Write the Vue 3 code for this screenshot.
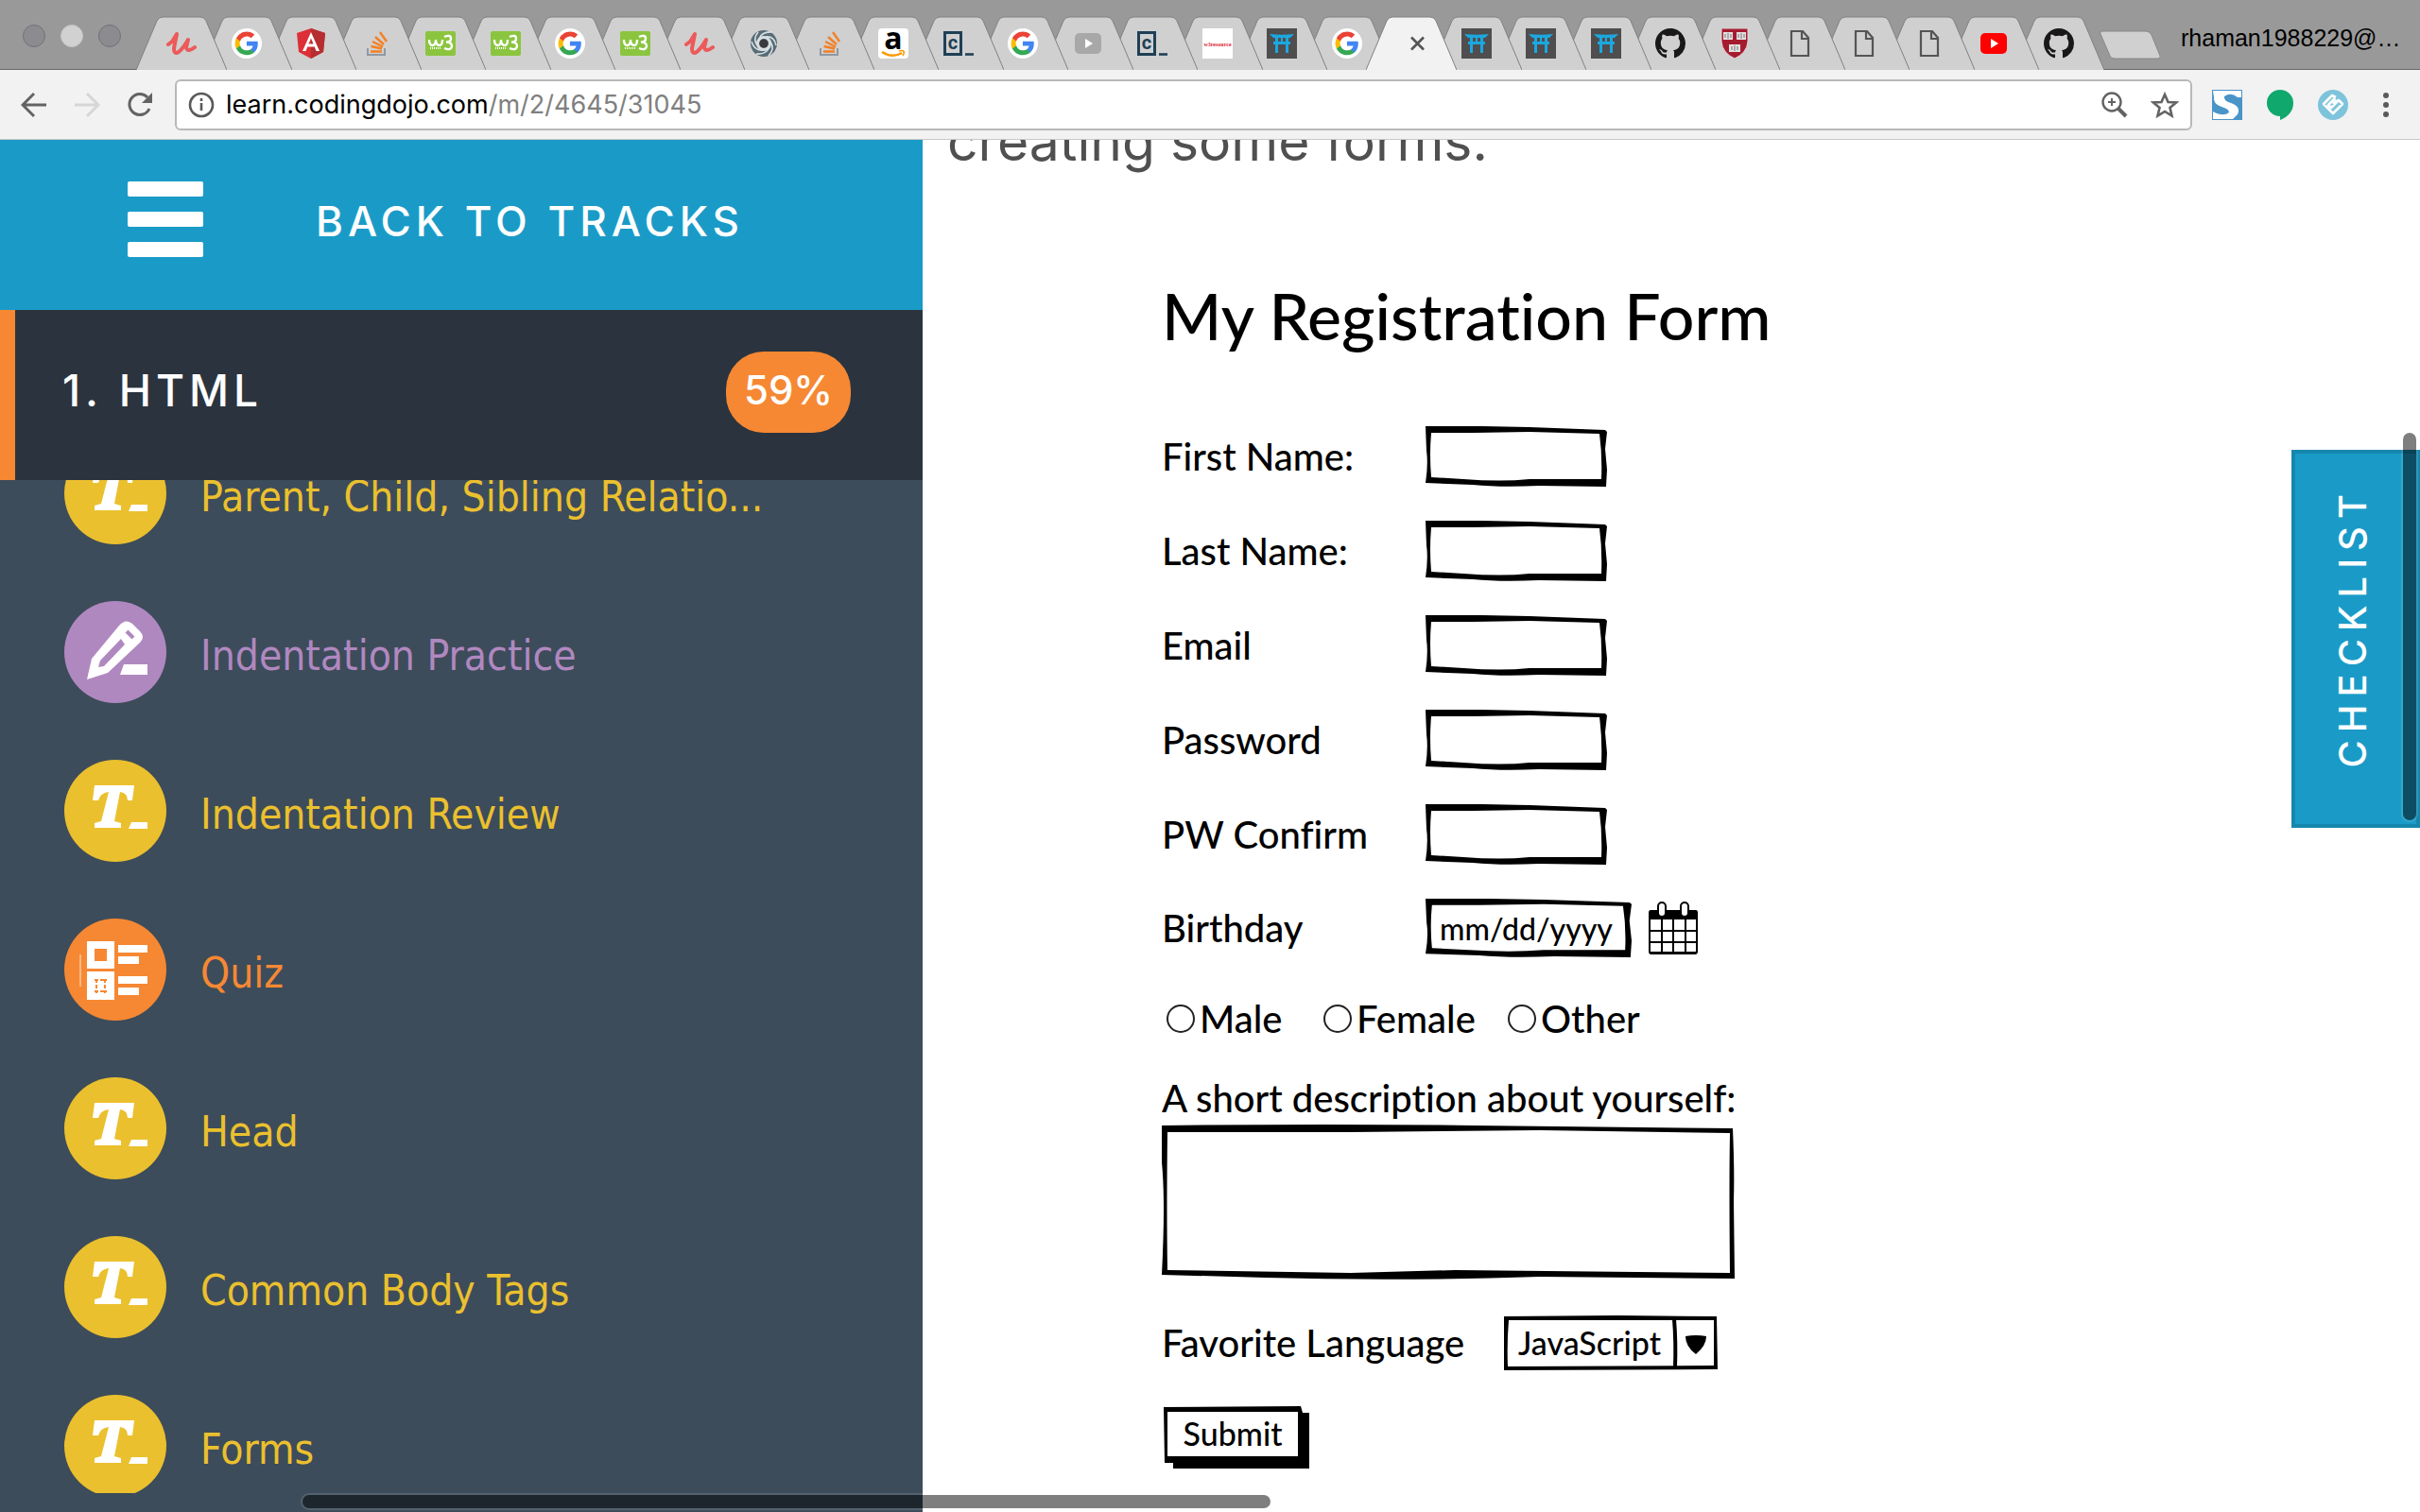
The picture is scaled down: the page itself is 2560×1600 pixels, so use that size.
<script setup>
import { ref } from 'vue'

const tabs = [
  'udemy', 'google', 'angular', 'stack', 'w3', 'w3', 'google', 'w3', 'udemy', 'swirl',
  'stack', 'amazon', 'codecademy', 'google', 'video', 'codecademy', 'w3resource', 'dojo', 'google', 'active',
  'dojo', 'dojo', 'dojo', 'github', 'harvard', 'page', 'page', 'page', 'youtube', 'github',
]

const lessons = [
  { title: 'Parent, Child, Sibling Relatio...', kind: 'text' },
  { title: 'Indentation Practice', kind: 'practice' },
  { title: 'Indentation Review', kind: 'text' },
  { title: 'Quiz', kind: 'quiz' },
  { title: 'Head', kind: 'text' },
  { title: 'Common Body Tags', kind: 'text' },
  { title: 'Forms', kind: 'text' },
]

const fields = [
  { id: 'first', label: 'First Name:', type: 'text' },
  { id: 'last', label: 'Last Name:', type: 'text' },
  { id: 'email', label: 'Email', type: 'email' },
  { id: 'pw', label: 'Password', type: 'password' },
  { id: 'pw2', label: 'PW Confirm', type: 'password' },
]

const genders = ['Male', 'Female', 'Other']
const gender = ref('')
const frame = 'M0 0L60 0L110 1L190 4L192 6L190 24L192 46L191 64L120 63Q80 65 50 62L0 60Q3 40 1 26ZM6 7Q4 30 6 54L40 56Q80 59 110 56L186 56Q187 30 184 8L110 6L50 7Z'
</script>

<template>
  <div class="window">
    <svg class="defs" aria-hidden="true">
      <symbol id="udemy" viewBox="0 0 32 32"><path d="M2 17L6 14L11 6L8 21Q8 28 13 25Q18 21 23 12L21 20Q22 26 30 20" fill="none" stroke="#ec5a5a" stroke-width="4" stroke-linejoin="round" stroke-linecap="round"/></symbol>
      <symbol id="google" viewBox="0 0 32 32"><circle cx="16" cy="16" r="16" fill="#fff"/><g transform="translate(2.500 2.500) scale(1.120)"><path fill="#4285f4" d="M22.56 12.25c0-.78-.07-1.53-.2-2.25H12v4.26h5.92c-.26 1.37-1.04 2.53-2.21 3.31v2.77h3.57c2.08-1.92 3.28-4.74 3.28-8.09z"/><path fill="#34a853" d="M12 23c2.97 0 5.46-.98 7.28-2.66l-3.57-2.77c-.98.66-2.23 1.06-3.71 1.06-2.86 0-5.29-1.93-6.16-4.53H2.18v2.84C3.99 20.53 7.7 23 12 23z"/><path fill="#fbbc05" d="M5.84 14.09c-.22-.66-.35-1.36-.35-2.09s.13-1.43.35-2.09V7.07H2.18C1.43 8.55 1 10.22 1 12s.43 3.45 1.18 4.93z"/><path fill="#ea4335" d="M12 5.38c1.62 0 3.06.56 4.21 1.64l3.15-3.15C17.45 2.09 14.97 1 12 1 7.7 1 3.99 3.47 2.18 7.07l3.66 2.84c.87-2.6 3.3-4.53 6.16-4.53z"/></g></symbol>
      <symbol id="angular" viewBox="0 0 32 32"><path d="M16 0L31 5L29 25L16 32L3 25L1 5Z" fill="#dd2f37"/><path d="M16 0L31 5L29 25L16 32Z" fill="#b52e31"/><path d="M16 4L25 24H21.500L19.700 19.500H12.300L10.500 24H7ZM16 10.500L13.500 16.500H18.500Z" fill="#fff" fill-rule="evenodd"/></symbol>
      <symbol id="stack" viewBox="0 0 32 32"><path d="M7 21V28H25V21" fill="none" stroke="#9199a1" stroke-width="2"/><path d="M10 24.500H22M10.500 19L22 21.500M12 14L23 19.500M15 9L24 17M20 4L27 14" stroke="#f48024" stroke-width="2.400"/></symbol>
      <symbol id="w3" viewBox="0 0 32 32"><rect y="3" width="32" height="26" rx="2" fill="#8bc53f"/><path d="M4 12Q4 18 7.500 18Q11 18 11 12Q11 18 15 18Q18 18 18 12M20 9Q27 6 27 11Q27 14.500 22 14.500Q28 14.500 28 19Q27 24 20 21" fill="none" stroke="#fff" stroke-width="2.400"/><path d="M5 21H17" stroke="#fff" stroke-width="2" stroke-dasharray="1 1"/></symbol>
      <symbol id="swirl" viewBox="0 0 32 32"><circle cx="16" cy="16" r="14" fill="#566c76"/><g fill="none" stroke="#d9dfe2" stroke-width="1.600"><circle cx="16" cy="16" r="6.500" stroke-width="3"/><path d="M11 11Q14 3 25 4M18 9Q27 8 29 18M23 14Q28 22 21 29M22 20Q18 28 8 27M15 23Q6 24 3 14M9 18Q4 11 10 4"/></g><circle cx="16" cy="16" r="4.500" fill="#3a3a3e"/></symbol>
      <symbol id="amazon" viewBox="0 0 32 32"><rect width="32" height="32" rx="4" fill="#fff"/><path d="M4 25Q15 32 25 26" fill="none" stroke="#f90" stroke-width="2.400"/><path d="M22 24Q30 22 26 29" fill="none" stroke="#f90" stroke-width="1.600"/></symbol>
      <symbol id="codecademy" viewBox="0 0 32 32"><path d="M1.500 4.500H18.500V27.500H1.500Z" fill="none" stroke="#1f4056" stroke-width="3"/><path d="M23 27.500H32" stroke="#1f4056" stroke-width="2.600"/></symbol>
      <symbol id="video" viewBox="0 0 32 32"><rect x="2" y="5" width="28" height="22" rx="5" fill="#a8a8a8"/><path d="M13 11L21 16L13 21Z" fill="#fff"/></symbol>
      <symbol id="youtube" viewBox="0 0 32 32"><rect x="2" y="5" width="28" height="22" rx="5" fill="#f00"/><path d="M13 11L21 16L13 21Z" fill="#fff"/></symbol>
      <symbol id="w3resource" viewBox="0 0 32 32"><rect width="32" height="32" fill="#fff"/></symbol>
      <symbol id="dojo" viewBox="0 0 32 32"><rect width="32" height="32" fill="#4f4d4e"/><path d="M3 6Q16 7.500 29 6L25 10H7Z" fill="#1ba8e0"/><path d="M10.500 9V26M21.500 9V26M7 15.500H25" stroke="#1ba8e0" stroke-width="3"/><path d="M16 9V15" stroke="#1ba8e0" stroke-width="2"/></symbol>
      <symbol id="github" viewBox="0 0 16 16"><path fill="#191717" d="M8 0C3.58 0 0 3.58 0 8c0 3.54 2.29 6.53 5.47 7.59.4.07.55-.17.55-.38 0-.19-.01-.82-.01-1.490-2.010.37-2.530-.49-2.690-.94-.09-.23-.48-.94-.82-1.130-.28-.15-.68-.52-.01-.53.63-.01 1.080.58 1.230.82.72 1.210 1.870.87 2.330.66.07-.52.28-.87.51-1.070-1.780-.2-3.640-.89-3.640-3.950 0-.87.31-1.590.82-2.150-.08-.2-.36-1.020.08-2.120 0 0 .67-.21 2.200.82.64-.18 1.320-.27 2-.27s1.360.09 2 .27c1.530-1.040 2.200-.82 2.200-.82.44 1.100.16 1.920.08 2.120.51.56.82 1.270.82 2.150 0 3.070-1.870 3.750-3.650 3.950.29.25.54.73.54 1.480 0 1.070-.01 1.930-.01 2.200 0 .21.15.46.55.38A8.010 8.010 0 0 0 16 8c0-4.420-3.580-8-8-8z"/></symbol>
      <symbol id="harvard" viewBox="0 0 32 32"><path d="M2 0H30V14Q29 26 16 32Q3 26 2 14Z" fill="#a51c30" stroke="#e8d5d8"/><path d="M4 4H14V12H4ZM18 4H28V12H18ZM10 17H22V25H10Z" fill="#e4e0e0"/><path d="M6 6V10M9 5V11M12 6V10M20 6V10M23 5V11M26 6V10M13 19V23M16 18V24M19 19V23" stroke="#777"/></symbol>
      <symbol id="page" viewBox="0 0 32 32"><path d="M7 3H19L25 10V29H7ZM18 3V11H25" fill="none" stroke="#555" stroke-width="2.200"/></symbol>
      <symbol id="active" viewBox="0 0 32 32"><path d="M16 9.500L29 22.500M29 9.500L16 22.500" stroke="#555" stroke-width="2.600"/></symbol>
      <symbol id="lesson-text" viewBox="0 0 108 108"><path d="M32 27H74L72 43H67Q67 35 59 34L53 65L60 67V72H32V67L39 65L47 34Q38 35 36 43H30Z" fill="#fff"/><path d="M71 66H88V73H68Z" fill="#fff"/></symbol>
      <symbol id="lesson-practice" viewBox="0 0 108 108"><path d="M58 26Q65 18 72 24L80 32Q86 38 80 44L46 76L24 83L29 61ZM38 63L36 70L42 69L64 46L60 40Z" fill="#fff" fill-rule="evenodd"/><path d="M66 32L73 39" stroke="#b088c0" stroke-width="4"/><path d="M63 67H88V78H59Z" fill="#fff"/></symbol>
      <symbol id="lesson-quiz" viewBox="0 0 108 108"><path d="M24 24H53V53H24ZM32 32V45H45V32ZM24 56H53V86H24Z" fill="#fff" fill-rule="evenodd"/><path d="M32 65H45M32 77H45M34 64V79M43 64V79" stroke="#f68833" stroke-width="2" stroke-dasharray="4 2"/><path d="M57 32H88M57 44H79M57 65H88M57 77H79" stroke="#fff" stroke-width="8"/><path d="M17 38V72" stroke="#fff" stroke-opacity=".4" stroke-width="2"/></symbol>
    </svg>

    <header class="tabstrip">
      <div class="lights"><i></i><i class="mid"></i><i></i></div>
      <nav class="tabs">
        <button v-for="(tab, i) in tabs" :key="i" class="tab" :class="{ active: tab === 'active' }" :style="{ zIndex: tab === 'active' ? 40 : 30 - i }" :aria-label="tab">
          <svg class="shape" viewBox="0 0 96 57"><path d="M0 57L22 5Q24 1 28 1H68Q72 1 74 5L96 57Z"/><path class="edge" d="M0 57L22 5Q24 1 28 1H68Q72 1 74 5L96 57"/></svg>
          <svg class="favicon" viewBox="0 0 32 32">
            <use :href="'#' + tab" />
            <text v-if="tab === 'amazon'" class="glyph-a" x="16" y="22">a</text>
            <text v-if="tab === 'codecademy'" class="glyph-c" x="10" y="22">c</text>
            <text v-if="tab === 'w3resource'" class="glyph-w" x="16" y="19">w3resource</text>
          </svg>
        </button>
      </nav>
      <button class="newtab" aria-label="New tab"><svg width="66" height="32" viewBox="0 0 66 32"><path d="M4 1H49Q53 1 55 5L64 27Q65 30 62 30H16Q12 30 11 27L1 4Q0 1 4 1Z" fill="#d0d0d0" stroke="#888"/></svg></button>
      <span class="account">rhaman1988229@…</span>
    </header>

    <div class="toolbar">
      <div class="nav">
        <button aria-label="Back"><svg width="28" height="28" viewBox="0 0 28 28"><path d="M27 14H3M14 2L2 14L14 26" stroke="#636363"/></svg></button>
        <button aria-label="Forward"><svg width="28" height="28" viewBox="0 0 28 28"><path d="M1 14H25M14 2L26 14L14 26" stroke="#d6d6d6"/></svg></button>
        <button aria-label="Reload"><svg width="28" height="28" viewBox="0 0 28 28"><path d="M24 18A11 11 0 1 1 22 6" stroke="#636363"/><path d="M27 1V12H16Z" fill="#636363"/></svg></button>
      </div>
      <div class="address">
        <svg width="28" height="28" viewBox="0 0 28 28"><circle cx="14" cy="14" r="12" fill="none" stroke="#5a5a5a" stroke-width="2.600"/><path d="M14 12V20M14 7V10" stroke="#5a5a5a" stroke-width="2.600"/></svg>
        <span class="url">learn.codingdojo.com<span>/m/2/4645/31045</span></span>
        <svg width="28" height="28" viewBox="0 0 28 28" fill="none" stroke="#636363"><circle cx="11" cy="11" r="9.500" stroke-width="2.400"/><path d="M18 18L26 26" stroke-width="4"/><path d="M11 7V15M7 11H15" stroke-width="2"/></svg>
        <svg width="30" height="28" viewBox="0 0 30 28"><path d="M15 3L18.500 11L27 11.500L20.500 17L22.500 25.500L15 21L7.500 25.500L9.500 17L3 11.500L11.500 11Z" fill="none" stroke="#636363" stroke-width="2.600"/></svg>
      </div>
      <div class="extensions">
        <svg width="32" height="32" viewBox="0 0 32 32"><rect width="32" height="32" fill="#4a94c8"/><path d="M1 1H31V8H27Q20 2 13 7Q12 12 20 14Q31 18 27 26L22 31H1V23Q12 29 18 24Q18 20 10 18Q1 15 2 8Z" fill="#fff"/></svg>
        <svg width="32" height="32" viewBox="0 0 32 32"><path d="M16 0A14 14 0 0 1 30 14Q30 26 16 32V28A14 14 0 0 1 16 0Z" fill="#10a86d"/></svg>
        <svg width="32" height="32" viewBox="0 0 32 32"><circle cx="16" cy="16" r="16" fill="#7dc4db"/><path d="M19 8L15 6L6 15L16 25L26 15L22 11L14 19L11 16L18 9M16 15L20 11" fill="none" stroke="#fff" stroke-width="2.600" stroke-linejoin="round"/></svg>
        <svg width="8" height="28" viewBox="0 0 8 28" fill="#5a5a5a"><circle cx="4" cy="4" r="3"/><circle cx="4" cy="14" r="3"/><circle cx="4" cy="24" r="3"/></svg>
      </div>
    </div>

    <div class="page">
      <aside class="sidebar">
        <a href="#" class="back">
          <span class="burger"><i></i><i></i><i></i></span>
          <span>BACK TO TRACKS</span>
        </a>
        <div class="track">
          <h2>1. HTML</h2>
          <span class="badge">59%</span>
        </div>
        <div class="clip">
          <ul class="lessons">
            <li v-for="l in lessons" :key="l.title">
              <a href="#" :class="l.kind">
                <span class="disc"><svg><use :href="'#lesson-' + l.kind" /></svg></span>
                <span class="title">{{ l.title }}</span>
              </a>
            </li>
          </ul>
        </div>
      </aside>

      <main class="content">
        <p class="intro">creating some forms.</p>
        <form class="sketch" @submit.prevent>
          <h1>My Registration Form</h1>
          <div v-for="f in fields" :key="f.id" class="row">
            <label :for="f.id">{{ f.label }}</label>
            <span class="box">
              <svg viewBox="0 0 192 64" preserveAspectRatio="none"><path :d="frame" fill-rule="evenodd"/></svg>
              <input :id="f.id" :type="f.type" />
            </span>
          </div>
          <div class="row">
            <label for="birthday">Birthday</label>
            <span class="box date">
              <svg viewBox="0 0 192 64" preserveAspectRatio="none"><path :d="frame" fill-rule="evenodd"/></svg>
              <input id="birthday" type="text" value="mm/dd/yyyy" />
            </span>
            <svg class="calendar" viewBox="0 0 54 58"><path d="M3 10H51Q53 10 53 13V54Q53 57 50 57H4Q1 57 1 54V13Q1 10 3 10ZM3 20V54H51V20Z" fill-rule="evenodd"/><path d="M15 19V56M27 19V56M40 19V56M2 32H52M2 44H52" stroke="#000" stroke-width="2"/><rect x="11" y="2" width="8" height="15" rx="4" fill="#fff" stroke="#000" stroke-width="2"/><rect x="35" y="2" width="8" height="15" rx="4" fill="#fff" stroke="#000" stroke-width="2"/></svg>
          </div>
          <div class="genders">
            <label v-for="g in genders" :key="g"><input v-model="gender" type="radio" name="gender" :value="g" />{{ g }}</label>
          </div>
          <label class="about" for="about">A short description about yourself:</label>
          <span class="box area">
            <svg viewBox="0 0 606 164" preserveAspectRatio="none"><path d="M0 1Q180 -1 330 1L604 4Q606 50 605 80L606 163L400 161Q250 166 110 162L0 159Q4 80 0 40ZM6 8Q5 90 6 154L200 157L310 154L601 157Q600 60 601 9L400 6L200 8Z" fill-rule="evenodd"/></svg>
            <textarea id="about"></textarea>
          </span>
          <div class="language">
            <label for="language">Favorite Language</label>
            <span class="box pick">
              <svg viewBox="0 0 226 58" preserveAspectRatio="none"><path d="M0 1L120 0L225 1L226 57L0 58ZM5 5Q3 30 4 54L222 53V5Z" fill-rule="evenodd"/><path d="M180 4Q182 28 181 55" fill="none" stroke="#000" stroke-width="4"/><path d="M192 22Q203 20 214 22Q214 32 203 41Q192 33 192 22Z"/></svg>
              <select id="language"><option>JavaScript</option></select>
            </span>
          </div>
          <button class="submit">
            <svg viewBox="0 0 154 66" preserveAspectRatio="none"><path d="M0 1L145 0L147 7H154V66H10V60H1Z"/><path d="M4 6H142V53H4Z" fill="#fff"/></svg>
            <span>Submit</span>
          </button>
        </form>
        <button class="checklist"><span>CHECKLIST</span></button>
      </main>
      <div class="vbar"></div>
      <div class="hbar"></div>
    </div>
  </div>
</template>

<style>
body { margin: 0; overflow: hidden; }
</style>

<style scoped>
* { box-sizing: border-box; }
button { border: 0; padding: 0; background: none; font: inherit; color: inherit; }
a { color: inherit; text-decoration: none; }
svg { display: block; flex: none; }
.defs { position: absolute; width: 0; height: 0; }
.window { display: flex; flex-direction: column; height: 100vh; background: #fff; }

.tabstrip { flex: none; display: flex; height: 74px; background: #999; border-bottom: 1px solid #686868; }
.lights { display: flex; gap: 16px; padding: 26px 0 0 24px; width: 158px; flex: none; }
.lights i { width: 24px; height: 24px; border-radius: 50%; background: #8c8b90; border: 1px solid #727177; }
.lights .mid { background: #d1d1d1; border-color: #c4c4c4; }
.tabs { flex: 1; display: flex; isolation: isolate; }
.tab { position: relative; flex: 1 1 0; display: flex; justify-content: center; padding-top: 30px; }
.shape { position: absolute; left: 50%; top: 17px; width: 96px; height: 57px; margin-left: -48px; fill: #d0d0d0; }
.edge { fill: none; stroke: #808080; stroke-width: 1; }
.active .shape { fill: #f2f2f2; }
.active .edge { fill: none; }
.favicon { position: relative; width: 32px; height: 32px; }
.favicon text { text-anchor: middle; }
.glyph-a { font: 700 32px "Open Sans", sans-serif; fill: #000; }
.glyph-c { font: 700 20px Roboto, sans-serif; fill: #1f4056; }
.glyph-w { font: 700 6px "Liberation Serif", serif; fill: #e02030; }
.newtab { width: 66px; margin: 32px 0 0 9px; align-self: flex-start; }
.account { width: 273px; padding-left: 20px; font: 25px/80px "Liberation Sans", sans-serif; color: #000; }

.toolbar { flex: none; display: flex; align-items: center; height: 74px; background: #f2f2f2; border-bottom: 1px solid #c8c8c8; }
.nav { display: flex; gap: 28px; padding-left: 22px; width: 185px; }
.nav svg { fill: none; stroke-width: 3; }
.address { flex: 1; display: flex; align-items: center; height: 54px; padding: 0 12px 0 12px; background: #fff; border: 2px solid #b8b8b8; border-radius: 6px; }
.url { flex: 1; padding-left: 12px; font: 27px/40px Inter, sans-serif; color: #000; }
.url span { color: #808080; }
.address svg + svg { margin-left: 24px; }
.extensions { display: flex; align-items: center; width: 241px; padding-left: 21px; gap: 24px; }
.extensions svg:last-child { margin-left: 12px; }

.page { position: relative; flex: 1; display: flex; min-height: 0; overflow: hidden; }
.sidebar { flex: none; display: flex; flex-direction: column; width: 976px; padding-bottom: 20px; background: #3d4c5a; }
.back { flex: none; display: flex; align-items: center; height: 180px; padding: 0 0 8px 135px; gap: 119px; background: #1a9bc7; color: #fff; font: 500 44px/52px Inter, sans-serif; letter-spacing: 5px; }
.burger { display: flex; flex-direction: column; gap: 16px; width: 80px; padding-bottom: 4px; }
.burger i { height: 16px; border-radius: 2px; background: #fff; }
.track { flex: none; display: flex; align-items: center; justify-content: space-between; height: 180px; padding: 0 76px 6px 50px; border-left: 16px solid #f68833; background: #2b343e; color: #fff; }
.track h2 { margin: 0; padding-bottom: 4px; font: 500 46px/56px Inter, sans-serif; letter-spacing: 5px; }
.badge { width: 132px; height: 86px; border-radius: 40px; background: #f68833; font: 500 42px/82px Inter, sans-serif; text-align: center; }
.clip { flex: 1; min-height: 0; overflow: hidden; }
.lessons { margin: -70px 0 0; padding: 0; list-style: none; }
.lessons a { display: flex; align-items: center; height: 168px; padding-left: 68px; gap: 36px; font: 44px/52px "DejaVu Sans Condensed", "DejaVu Sans", sans-serif; font-stretch: condensed; color: #ebc02e; }
.title { padding-top: 8px; }
.disc { width: 108px; height: 108px; border-radius: 50%; background: #ebc02e; }
.disc svg { width: 108px; height: 108px; }
.lessons .practice { color: #b088c0; }
.practice .disc { background: #b088c0; }
.lessons .quiz { color: #f68833; }
.quiz .disc { background: #f68833; }

.content { position: relative; flex: 1; overflow: hidden; }
.intro { margin: -34px 0 0 26px; font: 57px/72px Inter, sans-serif; color: #505050; }
.sketch { display: flex; flex-direction: column; align-items: flex-start; width: 680px; margin: 108px 0 0 253px; font: 500 40px/48px Lato, sans-serif; font-variant-ligatures: none; color: #000; }
h1 { margin: 0 0 77px; font: 500 68px/80px Lato, sans-serif; font-variant-ligatures: none; white-space: nowrap; }
.row { display: flex; align-items: center; margin-bottom: 36px; }
.row label { width: 279px; }
.box { position: relative; display: block; width: 192px; height: 64px; }
.box > svg { position: absolute; inset: 0; width: 100%; height: 100%; }
.box input, .box textarea, .box select { position: relative; width: 100%; height: 100%; border: 0; padding: 0 8px 0 15px; background: none; font: 500 34px/40px Lato, sans-serif; color: #000; appearance: none; resize: none; outline: none; }
.date { width: 218px; height: 62px; }
.date input { font-size: 32px; }
.calendar { width: 54px; height: 58px; margin-left: 17px; }
.genders { display: grid; grid-template-columns: 166px 195px auto; margin: 5px 0 36px 5px; }
.genders label { display: flex; align-items: center; gap: 5px; }
.genders input { appearance: none; width: 30px; height: 30px; margin: 0; border: 2px solid #222; border-radius: 50%; }
.about { margin-bottom: 4px; white-space: nowrap; }
.area { width: 606px; height: 164px; }
.language { display: flex; align-items: center; margin: 38px 0; white-space: nowrap; }
.language label { width: 362px; }
.pick { width: 226px; height: 58px; }
.submit { position: relative; width: 154px; height: 66px; margin-left: 2px; padding: 0 8px 8px 0; font: 500 34px/40px Lato, sans-serif; }
.submit svg { position: absolute; inset: 0; width: 100%; height: 100%; }
.submit span { position: relative; }
.checklist { position: absolute; right: 0; top: 328px; width: 136px; height: 400px; padding: 0 6px 24px 0; border: 4px solid #1587ad; background: #1a9bc7; color: #fff; font: 500 40px/48px Inter, sans-serif; letter-spacing: 8px; display: flex; align-items: center; justify-content: center; }
.checklist span { writing-mode: vertical-rl; transform: rotate(180deg); }
.vbar, .hbar { position: absolute; border-radius: 8px; background: rgba(0, 0, 0, .5); box-shadow: 0 0 0 2px rgba(255, 255, 255, .12); }
.vbar { right: 4px; top: 310px; width: 14px; height: 410px; }
.hbar { left: 320px; bottom: 4px; width: 1024px; height: 14px; }
</style>
